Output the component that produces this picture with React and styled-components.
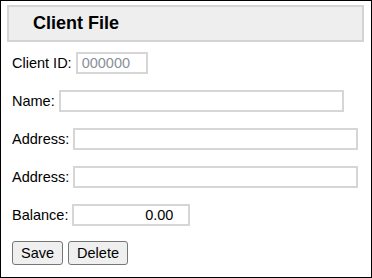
import React from "react";
import styled, { createGlobalStyle } from "styled-components";

const Global = createGlobalStyle`
  html, body { margin: 0; padding: 0; background: #fff; }
  body { font-family: "Liberation Sans", Arial, sans-serif; font-size: 14.5px; color: #000; }
  * { box-sizing: border-box; }
`;

const Frame = styled.div`
  width: 372px;
  height: 278px;
  border: 1px solid #000;
  padding: 4px 7px 0 6px;
  display: flex;
  flex-direction: column;
`;

const Header = styled.h1`
  margin: 0;
  height: 37px;
  background: #eeeeee;
  border: 2px solid #d4d4d4;
  display: flex;
  align-items: center;
  padding-left: 24px;
  font-size: 18px;
  font-weight: bold;
  color: #000;
`;

const Form = styled.form`
  display: flex;
  flex-direction: column;
  gap: 16px;
  padding: 10px 0 0 5px;
`;

const Row = styled.div`
  display: flex;
  align-items: center;
  gap: 4px;
  height: 22px;
`;

const Label = styled.label`
  font-size: 14.5px;
`;

const Field = styled.input`
  width: ${(p) => p.$w}px;
  height: 22px;
  border: 2px solid #d6d6d6;
  font-family: "Liberation Sans", Arial, sans-serif;
  font-size: 14.5px;
  padding: 0 4px;
  text-align: ${(p) => (p.$right ? "right" : "left")};
  padding-right: ${(p) => (p.$right ? "15px" : "4px")};
  color: #000;
  outline: none;
  &::placeholder { color: #8a8f99; }
`;

const Buttons = styled.div`
  display: flex;
  gap: 5px;
  margin-top: -1px;
`;

const Button = styled.button`
  height: 24px;
  padding: 0 8px;
  font-family: "Liberation Sans", Arial, sans-serif;
  font-size: 14.5px;
  color: #000;
  background: #efefef;
  border: 1px solid #767676;
  border-radius: 3px;
`;

export default function App() {
  return (
    <>
      <Global />
      <Frame>
        <Header>Client File</Header>
        <Form onSubmit={(e) => e.preventDefault()}>
          <Row>
            <Label>Client ID:</Label>
            <Field $w={72} placeholder="000000" />
          </Row>
          <Row>
            <Label>Name:</Label>
            <Field $w={285} />
          </Row>
          <Row>
            <Label>Address:</Label>
            <Field $w={285} />
          </Row>
          <Row>
            <Label>Address:</Label>
            <Field $w={285} />
          </Row>
          <Row>
            <Label>Balance:</Label>
            <Field $w={118} $right defaultValue="0.00" />
          </Row>
          <Buttons>
            <Button type="button">Save</Button>
            <Button type="button">Delete</Button>
          </Buttons>
        </Form>
      </Frame>
    </>
  );
}
